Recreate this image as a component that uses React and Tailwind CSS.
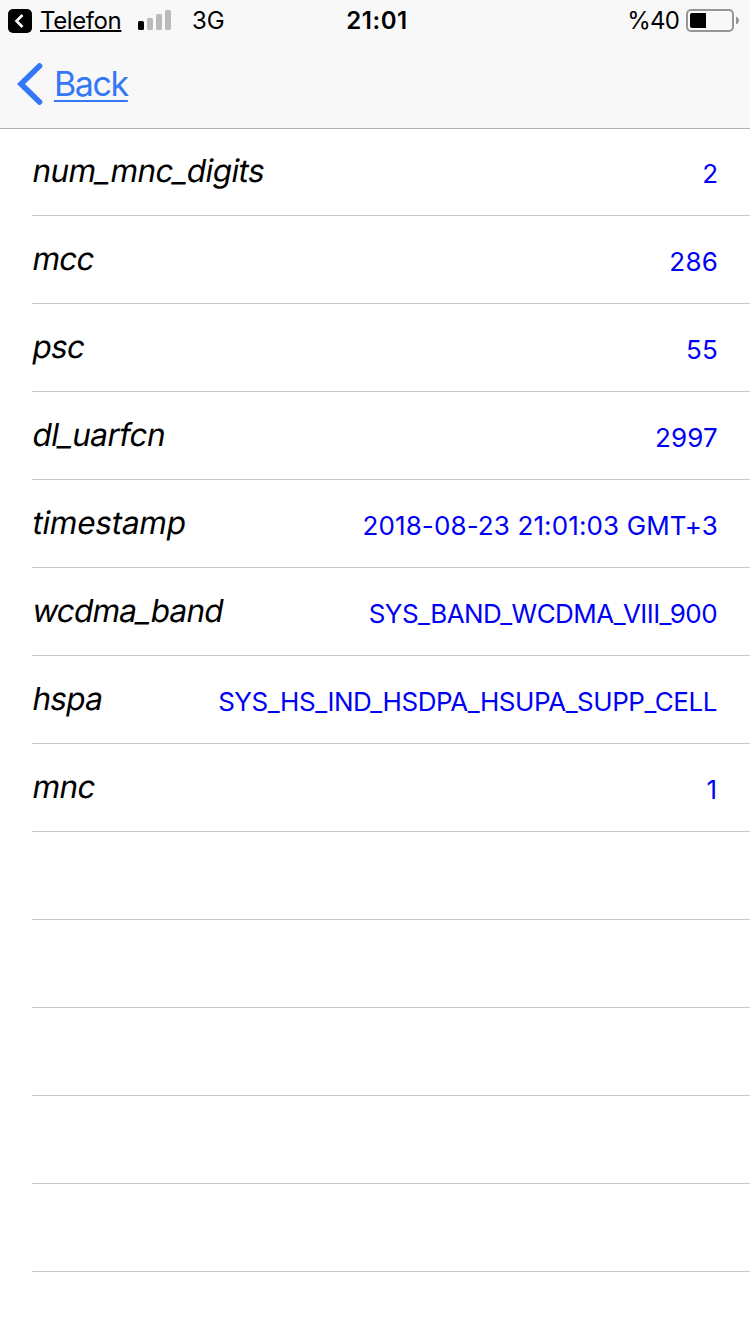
import React from 'react';
import { clsx } from 'clsx';

const rows = [
    { label: 'num_mnc_digits', value: '2', labelClass: 'tracking-[-0.55px]' },
    { label: 'mcc', value: '286', labelClass: 'tracking-[-0.7px]', valueClass: 'tracking-[0.2px]' },
    { label: 'psc', value: '55', labelClass: 'tracking-[-0.7px]', valueClass: 'tracking-[0.2px]' },
    { label: 'dl_uarfcn', value: '2997', labelClass: 'tracking-[-0.5px]', valueClass: 'tracking-[0.2px]' },
    {
        label: 'timestamp',
        value: '2018-08-23 21:01:03 GMT+3',
        labelClass: 'tracking-[-0.25px]',
        valueClass: 'tracking-[0.12px]',
    },
    {
        label: 'wcdma_band',
        value: 'SYS_BAND_WCDMA_VIII_900',
        labelClass: 'tracking-[-0.8px]',
        valueClass: 'mr-px tracking-[-0.55px]',
    },
    {
        label: 'hspa',
        value: 'SYS_HS_IND_HSDPA_HSUPA_SUPP_CELL',
        labelClass: 'tracking-[-0.7px]',
        valueClass: 'mr-px tracking-[-0.46px]',
    },
    { label: 'mnc', value: '1', labelClass: 'tracking-[-0.5px]', valueClass: 'mr-px' },
];

const EMPTY_ROWS = 5;

function ReturnIcon() {
    return (
        <svg width="24" height="24" viewBox="0 0 24 24" fill="none">
            <rect width="24" height="24" rx="5" fill="#000" />
            <path d="M14.5 6L8.5 12L14.5 18" stroke="#fff" strokeWidth="2.6" />
        </svg>
    );
}

function Signal() {
    return (
        <svg width="34" height="20" viewBox="0 0 34 20">
            <rect x="0" y="11" width="6" height="9" rx="1.5" fill="#000" />
            <rect x="9" y="8" width="6" height="12" rx="1.5" fill="#bababa" />
            <rect x="18" y="4" width="6" height="16" rx="1.5" fill="#bababa" />
            <rect x="27" y="0" width="6" height="20" rx="1.5" fill="#bababa" />
        </svg>
    );
}

function Battery() {
    return (
        <svg width="54" height="24" viewBox="0 0 54 24" fill="none">
            <rect x="1" y="1" width="46" height="21" rx="4" stroke="#969696" strokeWidth="2" />
            <path d="M6 4H20V19H6C4.9 19 4 18.1 4 17V6C4 4.9 4.9 4 6 4Z" fill="#000" />
            <path d="M50 7.5C54 9 54 14 50 15.5Z" fill="#969696" />
        </svg>
    );
}

function StatusBar() {
    return (
        <div className="grid h-10 grid-cols-3 text-[24px] leading-[42px]">
            <div className="flex items-start pl-2">
                <span className="mt-[9px]"><ReturnIcon /></span>
                <span className="ml-2 w-[81px] whitespace-nowrap tracking-[-0.4px] underline decoration-2 underline-offset-[1px]">
                    Telefon
                </span>
                <span className="mt-[10px] ml-[17px]"><Signal /></span>
                <span className="ml-5">3G</span>
            </div>
            <div className="pl-1 text-center font-semibold tracking-[0.6px]">21:01</div>
            <div className="flex items-start justify-end pr-[10px]">
                <span className="tracking-[-0.8px]">%40</span>
                <span className="mt-[9px] ml-[7px]"><Battery /></span>
            </div>
        </div>
    );
}

// The label is slanted by hand so that it keeps the upright letter shapes.
function Row({ label, value, labelClass, valueClass }) {
    return (
        <li className="ml-8 flex h-[88px] justify-between border-b border-[#c8c7cc] pr-8">
            <span className={clsx('-ml-px h-[85px] origin-[0_63%] -skew-x-[10deg] text-[31.5px] leading-[85px]', labelClass)}>
                {label}
            </span>
            <span className={clsx('text-[26px] leading-[92px] text-[#0000f5]', valueClass)}>{value}</span>
        </li>
    );
}

export default function App() {
    return (
        <div className="h-[1334px] w-[750px] overflow-hidden bg-white font-['Inter',sans-serif] text-black">
            <header className="relative h-32 bg-[#f8f8f8] shadow-[0_1px_0_#b2b2b2]">
                <StatusBar />
                <button className="flex h-[88px] items-start pl-[17px] text-[#3478f6]">
                    <svg className="mt-[22px]" width="26" height="44" viewBox="0 0 26 44" fill="none">
                        <path d="M22.5 4L4 22L22.5 40" stroke="currentColor" strokeWidth="5.6" strokeLinecap="round" />
                    </svg>
                    <span className="ml-[11px] text-[34px] leading-[88px] tracking-[-1.4px] underline decoration-2 underline-offset-[4px]">
                        Back
                    </span>
                </button>
            </header>
            <ul>
                {rows.map((row) => (
                    <Row key={row.label} {...row} />
                ))}
                {Array.from({ length: EMPTY_ROWS }, (_, i) => (
                    <li key={i} className="ml-8 h-[88px] border-b border-[#c8c7cc]" />
                ))}
            </ul>
        </div>
    );
}
